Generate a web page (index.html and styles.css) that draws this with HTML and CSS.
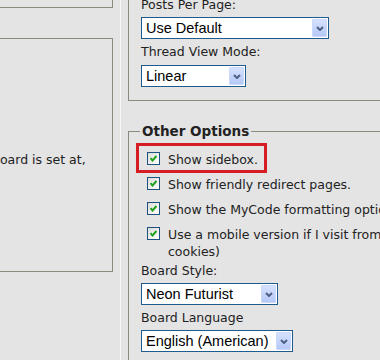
FILE: index.html
```html
<!DOCTYPE html>
<html lang="en">
<head>
    <title>User Control Panel - Options</title>
    <link rel="stylesheet" href="styles.css">
</head>
<body>

    <div class="page">
        <div class="side">
            <div class="side-box side-box-top"></div>
            <div class="side-box side-box-main">
                <p class="side-text">board is set at,</p>
            </div>
        </div>

        <div class="main">
            <div class="group-view">
                <label class="field-label">Posts Per Page:</label>
                <div class="select select-ppp">
                    <span class="select-value">Use Default</span>
                    <span class="select-btn"><svg width="8" height="5" viewBox="0 0 8 5"><polyline points="1,1 4,4 7,1" fill="none" stroke="#4d6185" stroke-width="2"/></svg></span>
                </div>

                <label class="field-label">Thread View Mode:</label>
                <div class="select select-view">
                    <span class="select-value">Linear</span>
                    <span class="select-btn"><svg width="8" height="5" viewBox="0 0 8 5"><polyline points="1,1 4,4 7,1" fill="none" stroke="#4d6185" stroke-width="2"/></svg></span>
                </div>
            </div>

            <fieldset class="group-other">
                <legend>Other Options</legend>

                <div class="highlight">
                    <label class="check-row">
                        <span class="checkbox"><svg width="7" height="7" viewBox="0 0 7 7"><polyline points="0.5,3 2.5,5.5 6.5,1" fill="none" stroke="#21a121" stroke-width="2"/></svg></span>
                        <span class="check-text">Show sidebox.</span>
                    </label>
                </div>

                <label class="check-row">
                    <span class="checkbox"><svg width="7" height="7" viewBox="0 0 7 7"><polyline points="0.5,3 2.5,5.5 6.5,1" fill="none" stroke="#21a121" stroke-width="2"/></svg></span>
                    <span class="check-text">Show friendly redirect pages.</span>
                </label>

                <label class="check-row">
                    <span class="checkbox"><svg width="7" height="7" viewBox="0 0 7 7"><polyline points="0.5,3 2.5,5.5 6.5,1" fill="none" stroke="#21a121" stroke-width="2"/></svg></span>
                    <span class="check-text">Show the MyCode formatting options on the posting pages.</span>
                </label>

                <label class="check-row">
                    <span class="checkbox"><svg width="7" height="7" viewBox="0 0 7 7"><polyline points="0.5,3 2.5,5.5 6.5,1" fill="none" stroke="#21a121" stroke-width="2"/></svg></span>
                    <span class="check-text">Use a mobile version if I visit from a mobile device (requires cookies)</span>
                </label>

                <label class="field-label field-label-first">Board Style:</label>
                <div class="select select-style">
                    <span class="select-value">Neon Futurist</span>
                    <span class="select-btn"><svg width="8" height="5" viewBox="0 0 8 5"><polyline points="1,1 4,4 7,1" fill="none" stroke="#4d6185" stroke-width="2"/></svg></span>
                </div>

                <label class="field-label">Board Language</label>
                <div class="select select-lang">
                    <span class="select-value">English (American)</span>
                    <span class="select-btn"><svg width="8" height="5" viewBox="0 0 8 5"><polyline points="1,1 4,4 7,1" fill="none" stroke="#4d6185" stroke-width="2"/></svg></span>
                </div>
            </fieldset>
        </div>
    </div>

</body>
</html>
```

FILE: styles.css
```css
body {
    font-family: "DejaVu Sans", Verdana, sans-serif;
    font-size: 12.5px;
    color: #222;
    background-color: #e4e4e4;
    margin: 0;
    height: 360px;
    overflow: hidden;
}

.page {
    display: flex;
    align-items: flex-start;
    height: 360px;
}

/* left column, cut off by the window */
.side {
    flex: none;
    width: 120px;
}

.side-box {
    margin-right: 7px;
    border-right: 1px solid #8a8a7f;
}

.side-box-top {
    height: 7px;
    border-bottom: 1px solid #8a8a7f;
}

.side-box-main {
    margin-top: 30px;
    height: 232px;
    border-top: 1px solid #8a8a7f;
    border-bottom: 1px solid #8a8a7f;
    overflow: hidden;
}

.side-text {
    margin: 0 0 0 -8px;
    padding-top: 112px;
    line-height: 17px;
    white-space: nowrap;
}

/* right column */
.main {
    flex: none;
    width: 500px;
    padding-left: 7px;
    border-left: 1px solid #f6f6f6;
}

.group-view {
    margin-top: -3px;
    padding: 0 0 13px 12px;
    border-left: 1px solid #8a8a7f;
    border-bottom: 1px solid #8a8a7f;
}

.field-label {
    display: block;
    line-height: 16px;
    margin-top: 5px;
}

.group-view .field-label:first-child {
    margin-top: 0;
}

.field-label-first {
    margin-top: 3px;
}

.select {
    display: flex;
    align-items: center;
    box-sizing: border-box;
    height: 22px;
    margin-top: 4px;
    padding: 0 1px 0 4px;
    background-color: #fff;
    border: 1px solid #1f5b8c;
    font-family: "Liberation Sans", Arial, sans-serif;
    font-size: 14.5px;
    color: #000;
}

.group-view .select:last-child {
    margin-top: 5px;
}

.select-value {
    flex: 1;
    white-space: nowrap;
    overflow: hidden;
}

.select-btn {
    flex: none;
    display: flex;
    align-items: center;
    justify-content: center;
    box-sizing: border-box;
    width: 15px;
    height: 18px;
    border: 1px solid #cad8fb;
    border-radius: 1px;
    background: linear-gradient(#d6e1fd, #b5c8f7);
}

.select-ppp { width: 188px; }
.select-view { width: 105px; }
.select-style { width: 137px; }
.select-lang { width: 152px; }

.group-other {
    margin: 22px 0 0 0;
    padding: 4px 0 40px 12px;
    border: 1px solid #8a8a7f;
}

.group-other legend {
    margin-left: -1px;
    padding: 0 2px;
    font-size: 13.5px;
    font-weight: bold;
    line-height: 16px;
}

.highlight {
    width: fit-content;
    margin-left: -5px;
    padding: 5px 6px 2px 8px;
    border: 3px solid #d71d24;
}

.check-row {
    display: flex;
    align-items: flex-start;
    gap: 8px;
    margin: 8px 0 0 6px;
    line-height: 17px;
}

.group-other > .check-row:nth-of-type(1) {
    margin-top: 3px;
}

.highlight .check-row {
    margin: 0;
}

.checkbox {
    flex: none;
    display: flex;
    align-items: center;
    justify-content: center;
    box-sizing: border-box;
    width: 13px;
    height: 13px;
    margin-top: 1px;
    border: 1px solid #1c5180;
    background: linear-gradient(135deg, #dcdcd7, #fff);
}

.check-text {
    max-width: 400px;
}
```
